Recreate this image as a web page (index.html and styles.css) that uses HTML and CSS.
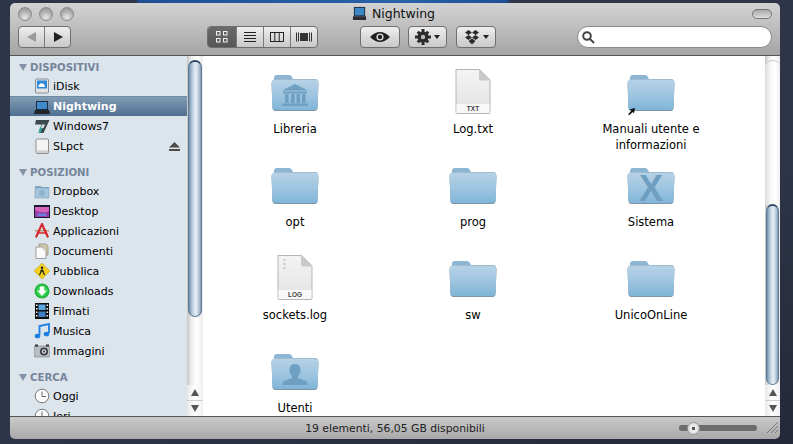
FILE: index.html
```html
<!DOCTYPE html>
<html lang="it">
<head>
<meta charset="utf-8">
<title>Nightwing</title>
<link rel="stylesheet" href="styles.css">
</head>
<body>
<svg class="defs" width="0" height="0" aria-hidden="true">
  <defs>
    <linearGradient id="fb" x1="0" y1="0" x2="0" y2="1"><stop offset="0" stop-color="#b7d2e6"/><stop offset=".55" stop-color="#9cc4e0"/><stop offset="1" stop-color="#7fb5d8"/></linearGradient>
    <linearGradient id="dg" x1="0" y1="0" x2="0" y2="1"><stop offset="0" stop-color="#f4f4f4"/><stop offset="1" stop-color="#e2e2e2"/></linearGradient>
    <symbol id="folder" viewBox="0 0 48 48">
      <path d="M3 16V11q0-3 3-3h12q2 0 3 2l1 2h22q3 0 3 3v3z" fill="#8db6d4"/>
      <path d="M0.500 16q0-2.500 2.500-3.500h42q2.500 1 2.500 3.500l-1 25q-.2 3-3 3H4.500q-2.800 0-3-3z" fill="#7f93a3"/>
      <path d="M0.500 16q0-2.500 2.500-3.500h42q2.500 1 2.500 3.500l-1 24.500q-.2 2.500-3 2.500H4.500q-2.800 0-3-2.500z" fill="url(#fb)"/>
    </symbol>
    <symbol id="doc" viewBox="0 0 48 48">
      <path d="M6.500 2h24l11 11v32q0 2-2 2h-31q-2 0-2-2z" fill="#b5b5b5"/>
      <path d="M7.500 3h22.500l10.500 10.500V45q0 1-1 1h-31q-1 0-1-1z" fill="url(#dg)"/>
      <path d="M30 2.500v9q0 2 2 2h9z" fill="#c9c9c9"/>
      <path d="M7.500 37h33v8.500q0 .5-.5.500H8q-.5 0-.5-.5z" fill="#f8f8f8"/>
    </symbol>
    <symbol id="clock" viewBox="0 0 16 16">
      <circle cx="8" cy="8" r="6.800" fill="#fbfbfb" stroke="#777" stroke-width="1"/>
      <path d="M8 3.500V8.500H12" fill="none" stroke="#666" stroke-width="1"/>
    </symbol>
  </defs>
</svg>

<main class="desktop">
  <div class="window">
    <header class="toolbar">
      <div class="title-row">
        <div class="lights"><span class="light"></span><span class="light"></span><span class="light"></span></div>
        <div class="title">
          <svg class="title-icon" viewBox="0 0 16 16"><rect x="2" y="1" width="12" height="10" fill="#1d2b3f"/><rect x="3" y="2" width="10" height="8" fill="#3d86c6"/><path d="M1 11h14v4H1z" fill="#2a2d32"/></svg>
          <span>Nightwing</span>
        </div>
        <div class="pill-cell"><span class="pill"></span></div>
      </div>
      <div class="tool-row">
        <div class="seg nav">
          <button class="seg-btn"><svg width="12" height="12" viewBox="0 0 12 12"><path d="M10 1v10L1 6z" fill="#9a9a9a"/></svg></button>
          <button class="seg-btn"><svg width="12" height="12" viewBox="0 0 12 12"><path d="M2 1v10l9-5z" fill="#222"/></svg></button>
        </div>
        <div class="seg views">
          <button class="seg-btn active"><svg width="14" height="12" viewBox="0 0 14 12" fill="none" stroke="#f2f2f2"><rect x="1.500" y=".5" width="3.500" height="3.500"/><rect x="8.500" y=".5" width="3.500" height="3.500"/><rect x="1.500" y="7.500" width="3.500" height="3.500"/><rect x="8.500" y="7.500" width="3.500" height="3.500"/></svg></button>
          <button class="seg-btn"><svg width="14" height="12" viewBox="0 0 14 12" stroke="#222"><path d="M1 1.500h12M1 4.500h12M1 7.500h12M1 10.500h12"/></svg></button>
          <button class="seg-btn"><svg width="14" height="12" viewBox="0 0 14 12" fill="none" stroke="#222"><rect x=".5" y="1.500" width="13" height="9"/><path d="M4.800 1.500v9M9.200 1.500v9"/></svg></button>
          <button class="seg-btn"><svg width="16" height="12" viewBox="0 0 16 12"><rect x="4" y="2" width="8" height="8" fill="#333"/><path d="M.5 1.500v9M2.500 1.500v9M13.500 1.500v9M15.500 1.500v9" stroke="#333"/></svg></button>
        </div>
        <button class="tool eye"><svg width="20" height="12" viewBox="0 0 20 12"><path d="M0 6Q10-4 20 6 10 16 0 6z" fill="#1f1f1f"/><circle cx="10" cy="6" r="3.600" fill="#ddd"/><circle cx="10" cy="6" r="2.200" fill="#1f1f1f"/></svg></button>
        <button class="tool gear">
          <svg width="16" height="16" viewBox="0 0 16 16"><g fill="#2b2b2b"><circle cx="8" cy="8" r="5.500"/><path d="M6.500 0h3v4h-3zM6.500 12h3v4h-3zM0 6.500h4v3H0zM12 6.500h4v3h-4zM1.700 3.800l2.100-2.100 2.500 2.500-2.100 2.100zM9.700 11.800l2.100-2.100 2.500 2.500-2.100 2.100zM1.700 12.200l2.500-2.500 2.100 2.100-2.500 2.500zM9.700 4.200l2.500-2.500 2.100 2.100-2.500 2.500z"/></g><circle cx="8" cy="8" r="2.200" fill="#bbb"/></svg>
          <span class="caret"></span>
        </button>
        <button class="tool box">
          <svg width="16" height="15" viewBox="0 0 16 15" fill="#2b2b2b"><path d="M4.500 0L8 2.500 4.500 5 1 2.500zM11.500 0L15 2.500 11.500 5 8 2.500zM4.500 5L8 7.500 4.500 10 1 7.500zM11.500 5L15 7.500 11.500 10 8 7.500zM4.500 11L8 8.500l3.500 2.500-3.500 3.500z"/></svg>
          <span class="caret"></span>
        </button>
        <div class="search">
          <svg width="13" height="13" viewBox="0 0 13 13" fill="none" stroke="#444" stroke-width="2"><circle cx="5" cy="5" r="3.800"/><path d="M8 8l4 4"/></svg>
        </div>
      </div>
    </header>

    <div class="panes">
      <aside class="sidebar">
        <div class="side-list">
          <h2 class="side-head first"><span class="tri"></span>DISPOSITIVI</h2>
          <div class="side-row"><svg class="si" viewBox="0 0 16 16"><rect x="1.500" y="1" width="13" height="14" rx="1" fill="#dfe3e6" stroke="#8b8f94"/><rect x="3" y="2.500" width="10" height="8" fill="#2c87d4"/><path d="M5 9q-1.500-1.500.5-2.500 1-2 3-1 2 0 2 2 1 .8 0 1.500z" fill="#fff"/></svg><span>iDisk</span></div>
          <div class="side-row selected"><svg class="si" viewBox="0 0 16 16"><rect x="2" y="2" width="12" height="9" fill="#1d2b3f"/><rect x="3" y="3" width="10" height="7" fill="#3f8ac9"/><path d="M1 11h14l1 4H0z" fill="#22252a"/></svg><span>Nightwing</span></div>
          <div class="side-row"><svg class="si" viewBox="0 0 16 16"><path d="M2 2h13.500l-6 13H4.500l3-8.500H1z" fill="#3b4a4d"/><path d="M6 9h3l-2.500 6H4.500z" fill="#2fa39a"/><path d="M8 6.500h3L9.500 10H7z" fill="#dfe7e6"/></svg><span>Windows7</span></div>
          <div class="side-row eject-row"><svg class="si" viewBox="0 0 16 16"><rect x="2" y="1" width="12.500" height="14.500" rx="1" fill="#f4f4f4" stroke="#8f8f8f"/><path d="M2.500 12.500h11.500v2.500H2.500z" fill="#cfcfcf"/></svg><span>SLpct</span><svg class="eject" width="11" height="9" viewBox="0 0 11 9"><path d="M5.500 0L11 5.500H0z" fill="#4b4b4b"/><rect y="7" width="11" height="2" fill="#4b4b4b"/></svg></div>

          <h2 class="side-head"><span class="tri"></span>POSIZIONI</h2>
          <div class="side-row"><svg class="si" viewBox="0 0 16 16"><path d="M1 4V3h6l1 1h7v11H1z" fill="#7fa9c8"/><rect x="1" y="5" width="14" height="10" fill="#a3c5dd" stroke="#7b98ad" stroke-width=".5"/><circle cx="8" cy="10" r="3" fill="#8eb2cc"/></svg><span>Dropbox</span></div>
          <div class="side-row"><svg class="si" viewBox="0 0 16 16"><rect y="2" width="16" height="13" fill="#1b1b30"/><rect x="1" y="4" width="14" height="10" fill="#9a3fa8"/><path d="M1 4h14v4Q8 11 1 7z" fill="#d664bb"/><path d="M3 13l2-3 3 1 3-1 2 3z" fill="#6a7fe0"/></svg><span>Desktop</span></div>
          <div class="side-row"><svg class="si" viewBox="0 0 16 16"><path d="M1 7h14v1.500H1z" fill="#b59a72"/><path d="M2 15l4-8.500M14 15L9 5" stroke="#a88a60" stroke-width="1.500"/><path d="M2 14L8 1l6 13" fill="none" stroke="#d8232a" stroke-width="2"/><path d="M5 10h6" stroke="#d8232a" stroke-width="1.500"/></svg><span>Applicazioni</span></div>
          <div class="side-row"><svg class="si" viewBox="0 0 16 16"><path d="M5 1h7l2 2v9H5z" fill="#cfc7a8" stroke="#8f8a75" stroke-width=".7"/><path d="M2 4h6.500L12 7.500v8H2z" fill="#fbfbfb" stroke="#8a8a8a" stroke-width=".8"/><path d="M8.500 4v3.500H12z" fill="#ddd"/></svg><span>Documenti</span></div>
          <div class="side-row"><svg class="si" viewBox="0 0 16 16"><path d="M8 0l8 8-8 8-8-8z" fill="#f2cf20" stroke="#b99a12" stroke-width=".5"/><circle cx="8" cy="4.800" r="1.200" fill="#222"/><path d="M8 6.500L5.500 12M8 6.500l2.500 5.500M6 8h4" stroke="#222" stroke-width="1.200"/></svg><span>Pubblica</span></div>
          <div class="side-row"><svg class="si" viewBox="0 0 16 16"><circle cx="8" cy="8" r="7.500" fill="#22b33a"/><circle cx="8" cy="8" r="5.800" fill="#35d252"/><path d="M5.800 3.500h4.400v4h2.600L8 13 3.200 7.500h2.600z" fill="#fff"/></svg><span>Downloads</span></div>
          <div class="side-row"><svg class="si" viewBox="0 0 16 16"><rect x="1" y="0" width="14" height="16" fill="#111"/><path d="M2 1.500h1.500v1.500H2zM2 5h1.500v1.500H2zM2 8.500h1.500V10H2zM2 12h1.500v1.500H2zM12.500 1.500H14V3h-1.500zM12.500 5H14v1.500h-1.500zM12.500 8.500H14V10h-1.500zM12.500 12H14v1.500h-1.500z" fill="#eee"/><rect x="4.500" y="1.500" width="7" height="5.500" fill="#58a8e4"/><rect x="4.500" y="8.500" width="7" height="5.500" fill="#3f80c8"/></svg><span>Filmati</span></div>
          <div class="side-row"><svg class="si" viewBox="0 0 16 16"><path d="M5.500 12V3L15 1v9" fill="none" stroke="#1d7fe2" stroke-width="1.800"/><ellipse cx="3.500" cy="13" rx="2.800" ry="2.300" fill="#1d7fe2"/><ellipse cx="12.500" cy="11" rx="2.800" ry="2.300" fill="#1d7fe2"/></svg><span>Musica</span></div>
          <div class="side-row"><svg class="si" viewBox="0 0 16 16"><rect y="3" width="16" height="11" rx="1" fill="#b7bcc2" stroke="#6f7378" stroke-width=".5"/><rect x="1" y="1.500" width="3" height="2" fill="#333"/><rect x="12" y="1.500" width="3" height="2" fill="#333"/><circle cx="10" cy="8.500" r="4" fill="#3b3f44"/><circle cx="10" cy="8.500" r="2.200" fill="#dfe3e6"/><circle cx="10" cy="8.500" r="1" fill="#2b2e33"/></svg><span>Immagini</span></div>

          <h2 class="side-head"><span class="tri"></span>CERCA</h2>
          <div class="side-row"><svg class="si"><use href="#clock"/></svg><span>Oggi</span></div>
          <div class="side-row"><svg class="si"><use href="#clock"/></svg><span>Ieri</span></div>
        </div>
        <div class="scrollbar side-bar">
          <div class="track"><div class="thumb"></div><div class="track-end"></div></div>
          <div class="arrows"><span class="arrow up"></span><span class="arrow down"></span></div>
        </div>
      </aside>

      <section class="files">
        <div class="file"><svg class="ficon"><use href="#folder"/><g fill="#6fa0c2"><path d="M24 17l13 6.500H11z"/><rect x="12" y="24.500" width="24" height="2"/><rect x="14" y="27" width="3.500" height="9"/><rect x="20" y="27" width="3.500" height="9"/><rect x="25.500" y="27" width="3.500" height="9"/><rect x="31" y="27" width="3.500" height="9"/><rect x="11" y="36.500" width="26" height="2.500"/></g></svg><span class="fname">Libreria</span></div>
        <div class="file"><svg class="ficon" viewBox="0 0 48 48"><use href="#doc" width="48" height="48"/><text x="24" y="44" class="ext">TXT</text></svg><span class="fname">Log.txt</span></div>
        <div class="file"><svg class="ficon" viewBox="0 0 48 48"><use href="#folder" width="48" height="48"/><path d="M1 47.500l3.500-4-2-1 5.500-1.500-1 5.500-1.200-1.500-3.300 3z" fill="#111"/></svg><span class="fname">Manuali utente e informazioni</span></div>

        <div class="file"><svg class="ficon"><use href="#folder"/></svg><span class="fname">opt</span></div>
        <div class="file"><svg class="ficon"><use href="#folder"/></svg><span class="fname">prog</span></div>
        <div class="file"><svg class="ficon" viewBox="0 0 48 48"><use href="#folder" width="48" height="48"/><text x="24" y="41" class="sys-x">X</text></svg><span class="fname">Sistema</span></div>

        <div class="file"><svg class="ficon" viewBox="0 0 48 48"><use href="#doc" width="48" height="48"/><path d="M12 6h3v2h-3zM12 10h3v2h-3zM12 14h3v2h-3z" fill="#d0d0d0"/><text x="24" y="44" class="ext">LOG</text></svg><span class="fname">sockets.log</span></div>
        <div class="file"><svg class="ficon"><use href="#folder"/></svg><span class="fname">sw</span></div>
        <div class="file"><svg class="ficon"><use href="#folder"/></svg><span class="fname">UnicoOnLine</span></div>

        <div class="file"><svg class="ficon"><use href="#folder"/><path d="M24 18c-4 0-5.500 3-5.500 6 0 3 1.500 5 2.500 6v2l-8 3c-1 .5-1.500 2-1.500 4h25c0-2-.5-3.500-1.500-4l-8-3v-2c1-1 2.500-3 2.500-6 0-3-1.500-6-5.500-6z" fill="#6fa0c2"/></svg><span class="fname">Utenti</span></div>
      </section>

      <div class="scrollbar main-bar">
        <div class="track"><div class="track-top"></div><div class="thumb"></div></div>
        <div class="arrows"><span class="arrow up"></span><span class="arrow down"></span></div>
      </div>
    </div>

    <footer class="status">
      <span></span>
      <span class="status-text">19 elementi, 56,05 GB disponibili</span>
      <div class="status-right">
        <div class="slider"><span class="knob"></span></div>
        <svg class="grip" width="11" height="11" viewBox="0 0 11 11" stroke="#777"><path d="M0 11L11 0M4 11l7-7M8 11l3-3"/></svg>
      </div>
    </footer>
  </div>
</main>
</body>
</html>
```

FILE: styles.css
```css
* { box-sizing: border-box; }
html, body { margin: 0; height: 100%; }
body { overflow: hidden; background: #2e3548; }
.defs { display: block; height: 0; }

.desktop {
  width: 793px;
  height: 444px;
  padding: 3px 13px 5px 10px;
  font-family: "DejaVu Sans", "Liberation Sans", sans-serif;
  color: #000;
  background:
    linear-gradient(90deg, transparent 135px, #1d4f93 140px, #2a62a8 400px, #1d4f93 505px, transparent 512px) top / 100% 3px no-repeat,
    linear-gradient(160deg, #2e3548 60%, #23293a 100%);
}

.window {
  width: 770px;
  height: 436px;
  display: flex;
  flex-direction: column;
  border-radius: 5px;
  overflow: hidden;
}

/* Toolbar */
.toolbar {
  height: 53px;
  flex: none;
  padding: 1px 8px 0;
  background: linear-gradient(#d2d2d2, #c6c6c6 30%, #a4a4a4);
  border-bottom: 1px solid #555;
}
.title-row {
  height: 19px;
  display: grid;
  grid-template-columns: 1fr auto 1fr;
  align-items: center;
}
.lights { display: flex; gap: 7px; }
.light {
  width: 14px;
  height: 14px;
  border-radius: 50%;
  border: 1px solid #8a8a8a;
  background: radial-gradient(circle at 50% 80%, #e8e8e8, #b0b0b0 55%, #8d8d8d);
}
.title {
  display: flex;
  align-items: center;
  gap: 5px;
  margin-left: -3px;
  font-size: 12.500px;
  color: #111;
}
.title-icon { width: 15px; height: 15px; }
.pill-cell { display: flex; justify-content: flex-end; }
.pill {
  width: 20px;
  height: 10px;
  border-radius: 5px;
  border: 1px solid #777;
  background: linear-gradient(#a8a8a8, #dedede);
}

.tool-row {
  height: 22px;
  margin-top: 3px;
  display: flex;
  align-items: stretch;
}
button {
  padding: 0;
  margin: 0;
  font: inherit;
  display: flex;
  align-items: center;
  justify-content: center;
  background: none;
  border: 0;
}
.seg {
  display: flex;
  border: 1px solid #6e6e6e;
  border-radius: 4px;
  overflow: hidden;
  background: linear-gradient(#eeeeee, #c9c9c9);
}
.seg-btn { flex: 1; border-left: 1px solid #7a7a7a; }
.seg-btn:first-child { border-left: 0; }
.nav { width: 53px; }
.views { width: 111px; margin-left: 136px; }
.seg-btn.active { background: linear-gradient(#6a6a6a, #565656); flex: 1.100; }
.tool {
  border: 1px solid #6e6e6e;
  border-radius: 4px;
  background: linear-gradient(#eeeeee, #c9c9c9);
  gap: 3px;
}
.eye { width: 40px; margin-left: 42px; }
.gear { width: 39px; margin-left: 8px; }
.box { width: 40px; margin-left: 9px; }
.caret {
  width: 0;
  height: 0;
  border-left: 3.500px solid transparent;
  border-right: 3.500px solid transparent;
  border-top: 4px solid #222;
}
.search {
  width: 195px;
  margin-left: 81px;
  border-radius: 11px;
  border: 1px solid #8a8a8a;
  background: #fff;
  display: flex;
  align-items: center;
  padding-left: 4px;
}

/* Panes */
.panes { flex: 1; min-height: 0; display: flex; }
.sidebar { width: 193px; flex: none; display: flex; background: #dce4ec; }
.side-list { width: 177px; flex: none; padding-top: 3px; overflow: hidden; }
.side-head {
  margin: 8px 0 0;
  height: 17px;
  line-height: 17px;
  padding-left: 9px;
  display: flex;
  align-items: center;
  gap: 3px;
  font-size: 10.200px;
  font-weight: bold;
  color: #75859b;
}
.side-head.first { margin-top: 0; }
.tri {
  width: 0;
  height: 0;
  border-left: 4px solid transparent;
  border-right: 4px solid transparent;
  border-top: 7px solid #8494a8;
}
.side-row {
  height: 20px;
  padding: 0 7px 0 24px;
  display: flex;
  align-items: center;
  gap: 3px;
  font-size: 11px;
  color: #000;
}
.si { width: 16px; height: 16px; flex: none; }
.eject { margin-left: auto; }
.selected {
  background: linear-gradient(#829cb4, #4d6f90);
  border-top: 1px solid #6f8aa3;
  color: #fff;
  font-weight: bold;
}

/* Scrollbars */
.scrollbar { display: flex; flex-direction: column; background: #f3f3f3; }
.side-bar { width: 16px; flex: none; }
.main-bar { width: 15px; flex: none; }
.track {
  flex: 1;
  min-height: 0;
  display: flex;
  flex-direction: column;
  background: linear-gradient(90deg, #c4c4c4, #ececec 25%, #fff 60%, #ececec);
  padding-top: 4px;
}
.thumb {
  border-radius: 7px;
  border: 1px solid #5d7a96;
  border-top: 2px solid #2f4863;
  background: linear-gradient(90deg, #6f8ca8, #b4c8da 25%, #e8eff5 55%, #bccddc 80%, #7d98b0);
  margin: 0 1px;
}
.side-bar .thumb { height: 257px; }
.track-end {
  flex: 1;
  margin-top: 0;
  border-radius: 0 0 7px 7px;
}
.main-bar .track-top {
  height: 144px;
  flex: none;
  border-top: 1px solid #c8c8c8;
  border-radius: 7px 7px 0 0;
  background: linear-gradient(90deg, #dcdcdc, #f8f8f8 40%, #fff 70%, #eee);
}
.main-bar .thumb { flex: 1; }
.arrows {
  height: 31px;
  flex: none;
  display: flex;
  flex-direction: column;
  background: linear-gradient(90deg, #e8e8e8, #fff 50%, #f0f0f0);
}
.arrow {
  flex: 1;
  display: flex;
  align-items: center;
  justify-content: center;
}
.arrow::before {
  content: "";
  width: 0;
  height: 0;
  border-left: 4px solid transparent;
  border-right: 4px solid transparent;
}
.up { border-bottom: 1px solid #cfcfcf; }
.up::before { border-bottom: 7px solid #555; }
.down::before { border-top: 7px solid #555; }

/* Files */
.files {
  flex: 1;
  min-width: 0;
  overflow: hidden;
  padding: 11px 0 0 3px;
  background: #fff;
  display: grid;
  grid-template-columns: repeat(3, 178px);
  grid-auto-rows: 93px;
}
.file {
  display: flex;
  flex-direction: column;
  align-items: center;
}
.ficon { width: 48px; height: 48px; flex: none; }
.fname {
  margin-top: 6px;
  width: 130px;
  font-size: 11.500px;
  line-height: 16px;
  text-align: center;
}
.ext {
  font-family: "Liberation Sans", sans-serif;
  font-size: 6.500px;
  font-weight: bold;
  fill: #444;
  text-anchor: middle;
}
.sys-x {
  font-family: "Liberation Sans", sans-serif;
  font-size: 36px;
  font-weight: bold;
  fill: #6f9fc0;
  text-anchor: middle;
}

/* Status bar */
.status {
  height: 23px;
  flex: none;
  padding: 0 2px 0 0;
  border-top: 1px solid #555;
  background: linear-gradient(#cacaca, #a9a9a9);
  display: grid;
  grid-template-columns: 1fr auto 1fr;
  align-items: center;
  font-size: 10.800px;
  color: #222;
}
.status-text { padding-left: 2px; }
.status-right { display: flex; justify-content: flex-end; align-items: center; gap: 10px; }
.slider {
  width: 78px;
  height: 6px;
  border-radius: 3px;
  background: #6c6c6c;
  display: flex;
  align-items: center;
  padding-left: 8px;
}
.knob {
  width: 13px;
  height: 13px;
  flex: none;
  border-radius: 50%;
  background: radial-gradient(circle, #555 0 1.500px, #f4f4f4 2px, #c8c8c8);
  border: 1px solid #999;
}
.grip { flex: none; align-self: flex-end; margin-bottom: 1px; }
```
